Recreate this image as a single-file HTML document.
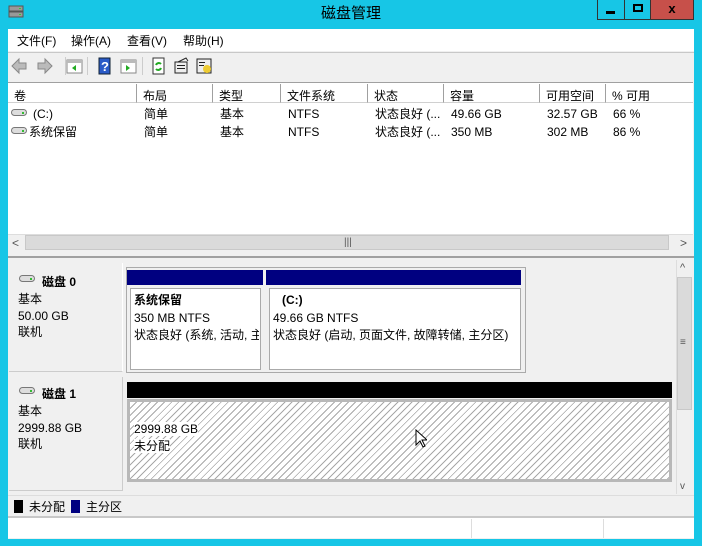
<!DOCTYPE html>
<html><head><meta charset="utf-8"><style>
*{margin:0;padding:0;box-sizing:border-box}
body{width:702px;height:546px;background:#17c6e6;position:relative;overflow:hidden;font-family:"Liberation Sans","Noto Sans CJK SC",sans-serif;font-size:12px;color:#000}
.a{position:absolute}
.t{position:absolute;white-space:nowrap;line-height:14px}
.hd{position:absolute;top:84px;height:19px;border-right:1px solid #a0a0a0;background:#fff;padding:3px 0 0 6px;border-bottom:1px solid #d0d0d0}
.hatch{background:repeating-linear-gradient(135deg,#fff 0 4px,#a8a8a8 4px 5px)}
</style></head><body>
<!-- title -->
<svg class="a" style="left:8px;top:5px" width="16" height="14"><rect x="1" y="1" width="14" height="5" fill="#999" stroke="#555"/><rect x="1" y="7" width="14" height="5" fill="#999" stroke="#555"/><rect x="11" y="3" width="2" height="1" fill="#3c3"/><rect x="11" y="9" width="2" height="1" fill="#3c3"/></svg>
<div class="t" style="left:321px;top:5px;font-size:15px;line-height:18px">磁盘管理</div>
<div class="a" style="left:597px;top:0;width:28px;height:20px;border:1px solid #333;border-top:none;background:#17c6e6"><div class="a" style="left:8px;top:11px;width:9px;height:3px;background:#000"></div></div>
<div class="a" style="left:624px;top:0;width:27px;height:20px;border:1px solid #333;border-top:none;background:#17c6e6"><div class="a" style="left:8px;top:4px;width:10px;height:8px;border:2px solid #000"></div></div>
<div class="a" style="left:650px;top:0;width:44px;height:20px;background:#c7504a;border:1px solid #333;border-top:none;color:#000;text-align:center;font-weight:bold;font-size:13px;line-height:18px">x</div>
<!-- window -->
<div class="a" style="left:8px;top:29px;width:686px;height:510px;background:#f0f0f0"></div>
<div class="a" style="left:8px;top:29px;width:686px;height:22px;background:#fff"></div>
<div class="t" style="left:17px;top:34px">文件(F)</div>
<div class="t" style="left:71px;top:34px">操作(A)</div>
<div class="t" style="left:127px;top:34px">查看(V)</div>
<div class="t" style="left:183px;top:34px">帮助(H)</div>
<div class="a" style="left:8px;top:52px;width:686px;height:1px;background:#c8c8c8"></div>
<!-- toolbar -->
<svg class="a" style="left:10px;top:56px" width="220" height="20">
<path d="M2 10 L9 3 V7 H16 V13 H9 V17Z" fill="#bbb" stroke="#888"/>
<path d="M42 10 L35 3 V7 H28 V13 H35 V17Z" fill="#bbb" stroke="#888"/>
<rect x="55" y="1" width="1" height="18" fill="#ccc"/>
<rect x="57" y="4" width="15" height="13" fill="#fff" stroke="#888"/><rect x="57" y="4" width="15" height="3" fill="#bbb"/><path d="M66 9 L62 12 L66 15Z" fill="#2a2"/>
<rect x="77" y="1" width="1" height="18" fill="#ccc"/>
<rect x="89" y="2" width="11" height="16" fill="#2a5bc8" stroke="#123"/><text x="91" y="15" fill="#fff" font-size="13" font-weight="bold">?</text>
<rect x="111" y="4" width="15" height="13" fill="#fff" stroke="#888"/><rect x="111" y="4" width="15" height="3" fill="#bbb"/><path d="M116 9 L120 12 L116 15Z" fill="#2a2"/>
<rect x="132" y="1" width="1" height="18" fill="#ccc"/>
<rect x="143" y="2" width="11" height="16" fill="#fff" stroke="#333"/><path d="M146 9 A3 3 0 0 1 151 8 M151 12 A3 3 0 0 1 146 13" stroke="#2a2" stroke-width="2" fill="none"/>
<rect x="165" y="6" width="12" height="11" fill="#eee" stroke="#222"/><path d="M168 6 L176 2 L178 5" stroke="#222" fill="none"/><rect x="167" y="9" width="8" height="1" fill="#222"/><rect x="167" y="12" width="8" height="1" fill="#222"/>
<rect x="187" y="3" width="14" height="14" fill="#eee" stroke="#222"/><circle cx="197" cy="13" r="4" fill="#ec3"/><rect x="189" y="6" width="6" height="1" fill="#222"/><rect x="189" y="9" width="5" height="1" fill="#222"/>
</svg>
<!-- list -->
<div class="a" style="left:8px;top:82px;width:685px;height:152px;background:#fff;border-top:1px solid #a0a0a0"></div>
<div class="hd" style="left:8px;width:129px">卷</div>
<div class="hd" style="left:137px;width:76px">布局</div>
<div class="hd" style="left:213px;width:68px">类型</div>
<div class="hd" style="left:281px;width:87px">文件系统</div>
<div class="hd" style="left:368px;width:76px">状态</div>
<div class="hd" style="left:444px;width:96px">容量</div>
<div class="hd" style="left:540px;width:66px">可用空间</div>
<div class="hd" style="left:606px;width:87px;border-right:none">% 可用</div>
<svg class="a" style="left:11px;top:109px" width="16" height="30"><rect x="0.5" y="0.5" width="15" height="6" rx="3" fill="#ddd" stroke="#777"/><rect x="11" y="3" width="2" height="2" fill="#3b3"/><rect x="0.5" y="18.5" width="15" height="6" rx="3" fill="#ddd" stroke="#777"/><rect x="11" y="21" width="2" height="2" fill="#3b3"/></svg>
<div class="t" style="left:33px;top:107px">(C:)</div>
<div class="t" style="left:29px;top:125px">系统保留</div>
<div class="t" style="left:144px;top:107px">简单</div><div class="t" style="left:144px;top:125px">简单</div>
<div class="t" style="left:220px;top:107px">基本</div><div class="t" style="left:220px;top:125px">基本</div>
<div class="t" style="left:288px;top:107px">NTFS</div><div class="t" style="left:288px;top:125px">NTFS</div>
<div class="t" style="left:375px;top:107px">状态良好 (...</div><div class="t" style="left:375px;top:125px">状态良好 (...</div>
<div class="t" style="left:451px;top:107px">49.66 GB</div><div class="t" style="left:451px;top:125px">350 MB</div>
<div class="t" style="left:547px;top:107px">32.57 GB</div><div class="t" style="left:547px;top:125px">302 MB</div>
<div class="t" style="left:613px;top:107px">66 %</div><div class="t" style="left:613px;top:125px">86 %</div>
<!-- hscroll -->
<div class="a" style="left:8px;top:234px;width:685px;height:17px;background:#f0f0f0;border-top:1px solid #ddd"></div>
<div class="t" style="left:12px;top:236px;color:#555">&lt;</div>
<div class="a" style="left:25px;top:235px;width:644px;height:15px;background:#dadada;border:1px solid #c8c8c8"></div>
<div class="t" style="left:344px;top:236px;color:#555;font-size:10px">|||</div>
<div class="t" style="left:680px;top:236px;color:#555">&gt;</div>
<div class="a" style="left:8px;top:256px;width:686px;height:2px;background:#a0a0a0"></div>
<!-- lower pane -->
<div class="a" style="left:9px;top:263px;width:114px;height:109px;background:#f0f0f0;border-right:1px solid #fff;border-bottom:1px solid #ccc"></div>
<svg class="a" style="left:19px;top:275px" width="16" height="8"><rect x="0.5" y="0.5" width="15" height="6" rx="3" fill="#ddd" stroke="#777"/><rect x="11" y="3" width="2" height="2" fill="#3b3"/></svg>
<div class="t" style="left:42px;top:275px;font-weight:bold">磁盘 0</div>
<div class="t" style="left:18px;top:292px">基本</div>
<div class="t" style="left:18px;top:309px">50.00 GB</div>
<div class="t" style="left:18px;top:325px">联机</div>
<div class="a" style="left:126px;top:267px;width:400px;height:106px;border:1px solid #aaa;background:#f0f0f0"></div>
<div class="a" style="left:127px;top:270px;width:136px;height:15px;background:#000080"></div>
<div class="a" style="left:266px;top:270px;width:255px;height:15px;background:#000080"></div>
<div class="a" style="left:130px;top:288px;width:131px;height:82px;background:#fff;border:1px solid #aaa"></div>
<div class="a" style="left:269px;top:288px;width:252px;height:82px;background:#fff;border:1px solid #aaa"></div>
<div class="t" style="left:134px;top:293px;font-weight:bold">系统保留</div>
<div class="t" style="left:134px;top:311px">350 MB NTFS</div>
<div class="t" style="left:134px;top:328px;width:125px;overflow:hidden">状态良好 (系统, 活动, 主</div>
<div class="t" style="left:282px;top:293px;font-weight:bold">(C:)</div>
<div class="t" style="left:273px;top:311px">49.66 GB NTFS</div>
<div class="t" style="left:273px;top:328px">状态良好 (启动, 页面文件, 故障转储, 主分区)</div>
<div class="a" style="left:9px;top:377px;width:114px;height:114px;background:#f0f0f0;border-right:1px solid #ccc;border-bottom:1px solid #ccc"></div>
<svg class="a" style="left:19px;top:387px" width="16" height="8"><rect x="0.5" y="0.5" width="15" height="6" rx="3" fill="#ddd" stroke="#777"/><rect x="11" y="3" width="2" height="2" fill="#3b3"/></svg>
<div class="t" style="left:42px;top:387px;font-weight:bold">磁盘 1</div>
<div class="t" style="left:18px;top:404px">基本</div>
<div class="t" style="left:18px;top:421px">2999.88 GB</div>
<div class="t" style="left:18px;top:437px">联机</div>
<div class="a" style="left:127px;top:382px;width:545px;height:16px;background:#000"></div>
<div class="a hatch" style="left:127px;top:399px;width:545px;height:83px;border:3px solid #b8b8b8"></div>
<div class="t" style="left:134px;top:422px;background:#fff">2999.88 GB</div>
<div class="t" style="left:134px;top:439px;background:#fff">未分配</div>
<svg class="a" style="left:415px;top:429px" width="12" height="20"><path d="M1 1 V16 L5 12 L8 18 L10 17 L7 11 H12Z" fill="#fff" stroke="#000"/></svg>
<!-- vscroll -->
<div class="a" style="left:676px;top:260px;width:17px;height:234px;background:#f0f0f0;border-left:1px solid #ddd"></div>
<div class="t" style="left:680px;top:261px;color:#555;font-size:11px">^</div>
<div class="a" style="left:677px;top:277px;width:15px;height:133px;background:#dadada;border:1px solid #c8c8c8"></div>
<div class="t" style="left:680px;top:336px;color:#555;font-size:10px">≡</div>
<div class="t" style="left:680px;top:480px;color:#555;font-size:10px">v</div>
<!-- legend -->
<div class="a" style="left:8px;top:495px;width:686px;height:1px;background:#ddd"></div>
<div class="a" style="left:14px;top:500px;width:9px;height:13px;background:#000"></div>
<div class="t" style="left:29px;top:500px">未分配</div>
<div class="a" style="left:71px;top:500px;width:9px;height:13px;background:#000080"></div>
<div class="t" style="left:86px;top:500px">主分区</div>
<div class="a" style="left:8px;top:516px;width:686px;height:2px;background:#c8c8c8"></div>
<div class="a" style="left:8px;top:518px;width:686px;height:20px;background:#fff"></div>
<div class="a" style="left:471px;top:519px;width:1px;height:19px;background:#ddd"></div>
<div class="a" style="left:603px;top:519px;width:1px;height:19px;background:#ddd"></div>
</body></html>
